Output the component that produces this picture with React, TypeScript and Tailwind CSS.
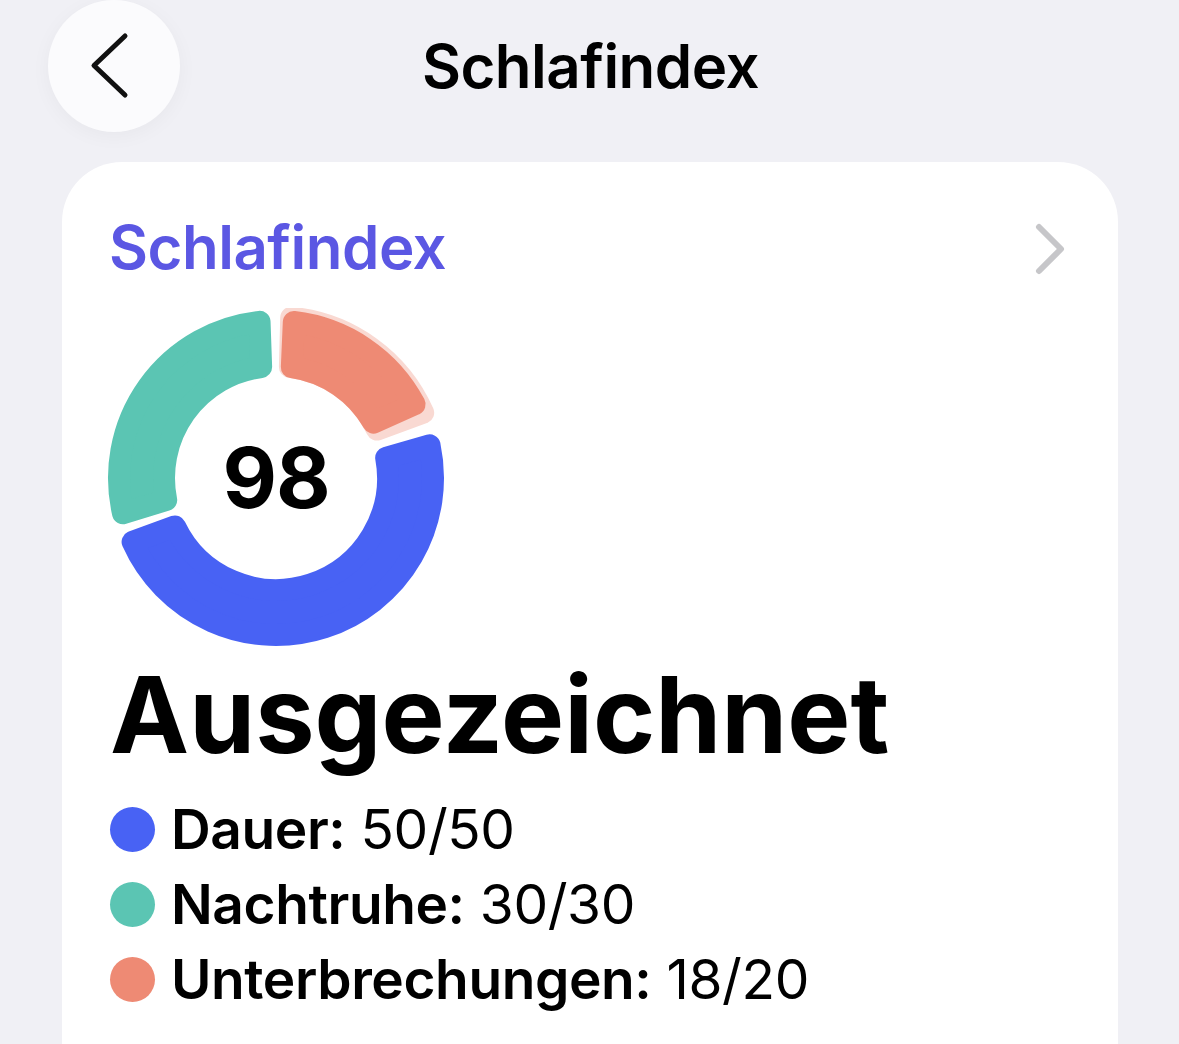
import React from "react";

type Segment = { from: number; to: number; color: string; outer?: number };

const CX = 170;
const CY = 170;
const R_IN = 101;
const R_OUT = 168;
const CORNER = 11;

function pt(r: number, deg: number) {
    const a = (deg * Math.PI) / 180;
    return [CX + r * Math.sin(a), CY - r * Math.cos(a)];
}

// annular sector shrunk by CORNER, then stroked with round joins to get soft corners
function sectorPath(from: number, to: number, ri: number, ro: number) {
    const o = ro - CORNER;
    const i = ri + CORNER;
    const oa = (CORNER / o) * (180 / Math.PI);
    const ia = (CORNER / i) * (180 / Math.PI);
    const [x1, y1] = pt(o, from + oa);
    const [x2, y2] = pt(o, to - oa);
    const [x3, y3] = pt(i, to - ia);
    const [x4, y4] = pt(i, from + ia);
    const large = to - from > 180 ? 1 : 0;
    return `M${x1} ${y1} A${o} ${o} 0 ${large} 1 ${x2} ${y2} L${x3} ${y3} A${i} ${i} 0 ${large} 0 ${x4} ${y4} Z`;
}

const segments: Segment[] = [
    { from: 1.5, to: 70, color: "#f9d9d2", outer: 172 },
    { from: 2.5, to: 66, color: "#ee8a74" },
    { from: 74, to: 250, color: "#4862f4" },
    { from: 253, to: 358, color: "#5bc5b3" },
];

const legend = [
    { label: "Dauer:", value: "50/50", color: "bg-[#4862f4]" },
    { label: "Nachtruhe:", value: "30/30", color: "bg-[#5bc5b3]" },
    { label: "Unterbrechungen:", value: "18/20", color: "bg-[#ee8a74]" },
];

function Donut() {
    return (
        <div className="relative w-[340px] h-[340px]">
            <svg width="340" height="340" viewBox="0 0 340 340">
                {segments.map((s, idx) => (
                    <path
                        key={idx}
                        d={sectorPath(s.from, s.to, R_IN, s.outer ?? R_OUT)}
                        fill={s.color}
                        stroke={s.color}
                        strokeWidth={CORNER * 2}
                        strokeLinejoin="round"
                    />
                ))}
            </svg>
            <div className="absolute inset-0 flex items-center justify-center">
                <span className="text-[84px] leading-none font-bold text-black tracking-[-1px]">98</span>
            </div>
        </div>
    );
}

export default function App() {
    return (
        <div className="min-h-screen bg-[#f0f0f5] font-['Inter',sans-serif] overflow-hidden">
            <div className="relative h-[132px] flex items-center justify-center">
                <button className="absolute left-[48px] top-0 w-[132px] h-[132px] rounded-full bg-[#fbfbfd] shadow-[0_4px_20px_rgba(0,0,0,0.04)] flex items-center justify-center">
                    <svg width="60" height="80" viewBox="0 0 60 80" fill="none" className="-ml-[6px]">
                        <path d="M44 10 L13 39.5 L44 69" stroke="#111" strokeWidth="5" strokeLinecap="round" strokeLinejoin="round" />
                    </svg>
                </button>
                <h1 className="text-[60px] leading-none font-semibold text-black tracking-[-0.5px] pl-[2px]">Schlafindex</h1>
            </div>

            <div className="mt-[30px] ml-[62px] mr-[61px] bg-white rounded-t-[60px] h-[900px] pt-[55px] pl-[48px] pr-[47px]">
                <div className="flex items-center justify-between">
                    <h2 className="text-[60px] leading-none font-semibold text-[#5b57e3] tracking-[-0.5px] -ml-[1px]">Schlafindex</h2>
                    <svg width="40" height="56" viewBox="0 0 40 56" fill="none" className="mt-[4px]">
                        <path d="M8 6 L30 28 L8 50" stroke="#c6c6c9" strokeWidth="6" strokeLinecap="round" strokeLinejoin="round" />
                    </svg>
                </div>

                <div className="mt-[31px] -ml-[4px]">
                    <Donut />
                </div>

                <div className="mt-[14px] text-[106px] leading-none font-bold text-black tracking-[0px]">Ausgezeichnet</div>

                <div className="mt-[24px] flex flex-col">
                    {legend.map((l) => (
                        <div key={l.label} className="h-[75px] flex items-center">
                            <span className={`w-[45px] h-[45px] rounded-full shrink-0 ${l.color}`} />
                            <span className="ml-[16px] text-[55px] leading-none text-black tracking-[-0.4px]">
                                <span className="font-semibold">{l.label}</span> {l.value}
                            </span>
                        </div>
                    ))}
                </div>
            </div>
        </div>
    );
}
